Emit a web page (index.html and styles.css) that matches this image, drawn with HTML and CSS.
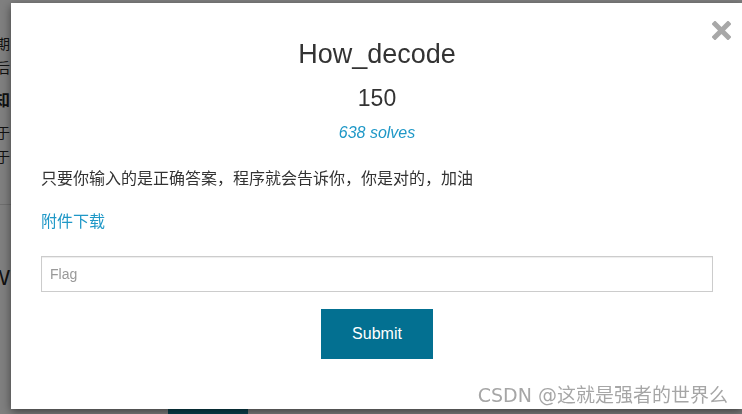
FILE: index.html
```html
<!DOCTYPE html>
<html lang="zh">
<head>
  <meta charset="UTF-8">
  <title>How_decode</title>
  <meta name="viewport" content="width=device-width, initial-scale=1">
  <link rel="stylesheet" href="styles.css">
</head>
<body>

  <!-- Página por trás do modal -->
  <div class="page">
    <p class="page-line first">比赛日期</p>
    <p class="page-line">开始后</p>
    <h4 class="page-title">参赛须知</h4>
    <p class="page-line">关于</p>
    <p class="page-line">属于</p>
    <hr class="page-rule">
    <h3 class="page-head">W</h3>
    <div class="page-btn"></div>
  </div>

  <!-- Modal do desafio -->
  <div class="backdrop">
    <div class="modal">
      <span class="close" title="Close">
        <svg width="19" height="19" viewBox="0 0 19 19">
          <path d="M3 3 L16 16 M16 3 L3 16" stroke="#a8a8a8" stroke-width="5" stroke-linecap="square"/>
        </svg>
      </span>

      <h2 class="chal-name">How_decode</h2>
      <div class="chal-value">150</div>
      <div class="chal-solves">638 solves</div>

      <p class="chal-desc">只要你输入的是正确答案，程序就会告诉你，你是对的，加油</p>
      <a class="chal-file" href="#">附件下载</a>

      <input class="flag-input" type="text" placeholder="Flag">
      <div class="submit-row">
        <button class="submit-btn">Submit</button>
      </div>

      <span class="watermark">CSDN @这就是强者的世界么</span>
    </div>
  </div>

</body>
</html>
```

FILE: styles.css
```css
body {
  margin: 0;
  font-family: "Liberation Sans", Arial, "Noto Sans CJK SC", sans-serif;
  color: #333;
  background: #fff;
  overflow: hidden;
}

/* Página de fundo (só a borda esquerda fica visível) */
.page {
  width: 10px;
  display: flex;
  flex-direction: column;
  align-items: flex-end;
  white-space: nowrap;
  color: #222;
}

.page-line {
  margin: 0;
  font-size: 14px;
  line-height: 24px;
}

.page-line.first {
  margin-top: 32px;
}

.page-title {
  margin: 9px 0 8px;
  font-size: 16px;
  line-height: 24px;
}

.page-rule {
  align-self: stretch;
  width: 40px;
  margin: 35px 0 0;
  border: none;
  border-top: 1px solid #ddd;
}

.page-head {
  margin: 58px 0 0;
  font-size: 22px;
  font-weight: normal;
  line-height: 30px;
}

.page-btn {
  width: 80px;
  height: 40px;
  margin: 100px -238px 0 0;
  background: #17859f;
}

/* Modal */
.backdrop {
  position: fixed;
  inset: 0;
  background: rgba(0, 0, 0, 0.5);
  padding: 3px 0 0 11px;
}

.modal {
  position: relative;
  width: 732px;
  height: 406px;
  box-sizing: border-box;
  padding: 35px 30px 0;
  background: #fff;
  box-shadow: 0 3px 9px rgba(0, 0, 0, 0.5);
  text-align: center;
}

.close {
  position: absolute;
  top: 18px;
  right: 12px;
  width: 19px;
  height: 19px;
  cursor: pointer;
}

.close svg {
  display: block;
}

.chal-name {
  margin: 0;
  font-size: 27px;
  font-weight: normal;
  line-height: 32px;
}

.chal-value {
  margin-top: 14px;
  font-size: 23px;
  line-height: 28px;
}

.chal-solves {
  margin-top: 11px;
  font-size: 16px;
  font-style: italic;
  line-height: 20px;
  color: #1f98c7;
}

.chal-desc {
  margin: 25px 0 0;
  text-align: left;
  font-size: 16px;
  line-height: 22px;
}

.chal-file {
  display: block;
  margin-top: 21px;
  text-align: left;
  font-size: 16px;
  line-height: 22px;
  color: #1f98c7;
  text-decoration: none;
}

.flag-input {
  display: block;
  width: 100%;
  height: 36px;
  box-sizing: border-box;
  margin-top: 23px;
  padding: 0 8px;
  border: 1px solid #ccc;
  box-shadow: inset 0 1px 1px rgba(0, 0, 0, 0.075);
  font-family: "Liberation Sans", Arial, sans-serif;
  font-size: 14px;
  color: #555;
  outline: none;
}

.flag-input::placeholder {
  color: #999;
}

.submit-row {
  margin-top: 17px;
}

.submit-btn {
  width: 112px;
  height: 50px;
  border: none;
  background: #037091;
  color: #fff;
  font-family: "Liberation Sans", Arial, sans-serif;
  font-size: 16px;
  cursor: pointer;
}

.watermark {
  position: absolute;
  right: 15px;
  bottom: 3px;
  font-size: 19px;
  line-height: 22px;
  color: #a6a6a6;
  font-family: "DejaVu Sans", "Noto Sans CJK SC", sans-serif;
  white-space: nowrap;
}
```
